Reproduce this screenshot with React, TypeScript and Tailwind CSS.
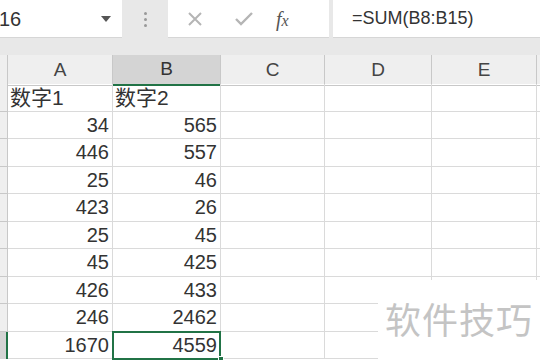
import React from "react";

const colA = ["34", "446", "25", "423", "25", "45", "426", "246", "1670"];
const colB = ["565", "557", "46", "26", "45", "425", "433", "2462", "4559"];

const sans = { fontFamily: '"Liberation Sans", Arial, sans-serif' };
const cjk = { fontFamily: '"Liberation Sans", "Noto Sans CJK SC", sans-serif' };

function FormulaBar() {
  return (
    <div className="flex h-[38px] bg-[#e8e8e8]">
      {/* name box */}
      <div className="w-[122px] bg-white flex items-center justify-between border-b border-[#d6d6d6]">
        <span className="text-[20px] text-[#333] -ml-[1px]" style={sans}>16</span>
        <svg width="10" height="6" viewBox="0 0 10 6" className="mr-[11px]">
          <path d="M0 0 L10 0 L5 6 Z" fill="#555" />
        </svg>
      </div>
      <div className="w-[46px] flex flex-col items-center justify-center gap-[3px]">
        <span className="w-[3px] h-[3px] rounded-full bg-[#999]" />
        <span className="w-[3px] h-[3px] rounded-full bg-[#999]" />
        <span className="w-[3px] h-[3px] rounded-full bg-[#999]" />
      </div>
      {/* cancel / enter / fx */}
      <div className="w-[161px] bg-white flex items-center border-b border-[#d6d6d6]">
        <svg width="16" height="16" viewBox="0 0 16 16" className="ml-[19px]">
          <path d="M2 2 L14 14 M14 2 L2 14" stroke="#b5b5b5" strokeWidth="2" />
        </svg>
        <svg width="20" height="16" viewBox="0 0 20 16" className="ml-[31px]">
          <path d="M2 8 L7 13 L18 2" stroke="#b5b5b5" strokeWidth="2.4" fill="none" />
        </svg>
        <span
          className="ml-[22px] text-[20px] italic text-[#555] leading-none"
          style={{ fontFamily: '"Liberation Serif", serif' }}
        >
          f<span className="text-[16px]">x</span>
        </span>
      </div>
      <div className="w-[4px]" />
      <div className="flex-1 bg-white flex items-center pl-[19px] border-b border-[#d6d6d6]">
        <span className="text-[18px] text-[#333]" style={sans}>=SUM(B8:B15)</span>
      </div>
    </div>
  );
}

function Header() {
  const cols = ["A", "B", "C", "D", "E"];
  return (
    <div className="grid grid-cols-[8px_105px_108px_104px_107px_105px_3px] h-[29px] bg-[#efefef]">
      <div className="border-r border-b border-[#c8c8c8]" />
      {cols.map((c) => (
        <div
          key={c}
          className={
            c === "B"
              ? "flex items-center justify-center bg-[#d4d4d4] border-r border-[#c8c8c8] border-b-2 border-b-[#217346] text-[19px] text-[#333]"
              : "flex items-center justify-center border-r border-b border-[#c8c8c8] text-[19px] text-[#444]"
          }
          style={sans}
        >
          {c}
        </div>
      ))}
      <div className="border-b border-[#c8c8c8]" />
    </div>
  );
}

function Row({ a, b, last, head }: { a: string; b: string; last?: boolean; head?: boolean }) {
  const cell = "border-r border-b border-[#dadada] h-[27.5px] flex items-center text-[20px] text-[#333] leading-none";
  const headCell = " justify-start pl-[2px] text-[21px]";
  return (
    <div className="grid grid-cols-[8px_105px_108px_104px_107px_105px_3px]">
      <div
        className={
          last
            ? "bg-[#d4d4d4] border-r-2 border-[#217346] h-[27.5px]"
            : "bg-[#efefef] border-r border-b border-[#c8c8c8] h-[27.5px]"
        }
      />
      <div className={cell + (head ? headCell : " justify-end pr-[3px]")} style={head ? cjk : sans}>
        {a}
      </div>
      <div
        className={cell + " relative" + (head ? headCell : " justify-end pr-[3px]")}
        style={head ? cjk : sans}
      >
        {b}
        {last && (
          <>
            <div className="absolute -left-[1px] -top-[1px] w-[109px] h-[29px] border-2 border-[#217346]" />
            <div className="absolute -right-[4px] -bottom-[4px] w-[6px] h-[6px] bg-[#217346] border border-white" />
          </>
        )}
      </div>
      <div className={cell} />
      <div className={cell} />
      <div className={cell} />
      <div className="h-[27.5px] border-b border-[#dadada]" />
    </div>
  );
}

export default function App() {
  return (
    <div className="relative w-[540px] h-[360px] overflow-hidden bg-white">
      <FormulaBar />
      <div className="h-[17px] bg-[#e8e8e8]" />
      <Header />
      <Row a="数字1" b="数字2" head />
      {colA.map((a, i) => (
        <Row key={i} a={a} b={colB[i]} last={i === colA.length - 1} />
      ))}
      {/* watermark */}
      <div className="absolute left-[378px] top-[280px] w-[162px] h-[80px] bg-white flex items-center justify-center">
        <span
          className="text-[36px] text-[#c4c4c4] tracking-[1px] mt-[-4px]"
          style={{ fontFamily: '"Noto Sans CJK SC", sans-serif' }}
        >
          软件技巧
        </span>
      </div>
    </div>
  );
}
